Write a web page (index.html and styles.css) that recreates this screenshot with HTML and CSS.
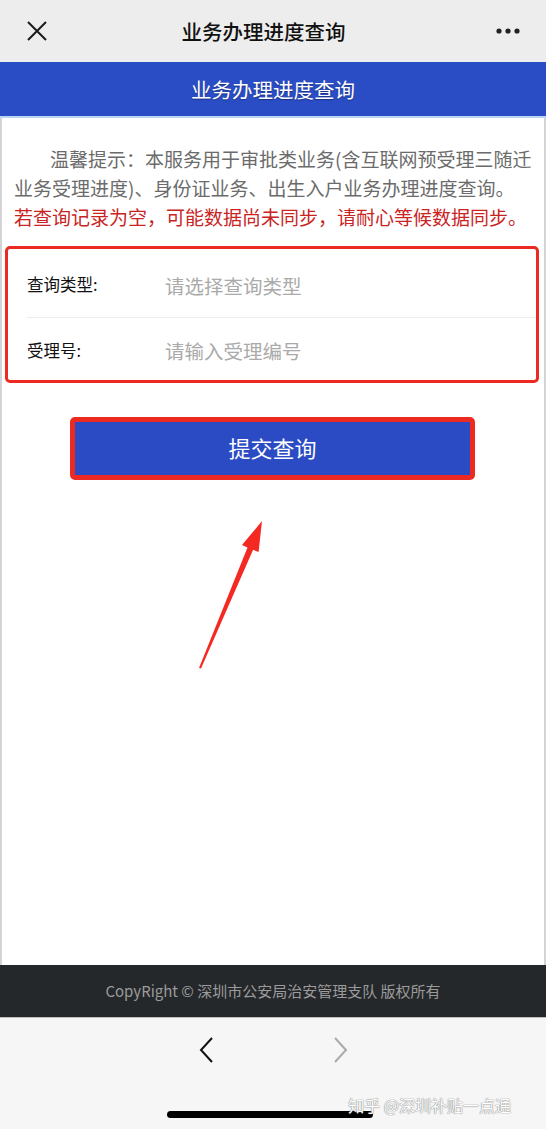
FILE: index.html
```html
<!DOCTYPE html>
<html lang="zh-CN">
<head>
  <meta charset="UTF-8">
  <meta name="viewport" content="width=device-width, initial-scale=1.0">
  <title>业务办理进度查询</title>
  <link rel="stylesheet" href="styles.css">
</head>
<body>
  <div class="topbar">
    <svg class="close" width="20" height="20" viewBox="0 0 20 20">
      <path d="M1 1 L19 19 M19 1 L1 19" stroke="#1a1a1a" stroke-width="2" fill="none"/>
    </svg>
    <div class="topbar-title">业务办理进度查询</div>
    <svg class="more" width="24" height="6" viewBox="0 0 24 6">
      <circle cx="3" cy="3" r="2.6" fill="#222"/>
      <circle cx="12" cy="3" r="2.6" fill="#222"/>
      <circle cx="21" cy="3" r="2.6" fill="#222"/>
    </svg>
  </div>

  <div class="header">业务办理进度查询</div>

  <div class="main">
    <div class="notice">
      <p class="tip">温馨提示：本服务用于审批类业务(含互联网预受理三随迁业务受理进度)、身份证业务、出生入户业务办理进度查询。</p>
      <p class="warn">若查询记录为空，可能数据尚未同步，请耐心等候数据同步。</p>
    </div>

    <form class="query-form">
      <div class="row">
        <label class="row-label">查询类型:</label>
        <span class="row-input">请选择查询类型</span>
      </div>
      <div class="row">
        <label class="row-label" for="num">受理号:</label>
        <input class="row-input" id="num" type="text" placeholder="请输入受理编号">
      </div>
    </form>

    <div class="btn-wrap">
      <button class="submit" type="button">提交查询</button>
    </div>

    <!-- 标注箭头 -->
    <svg class="arrow" viewBox="0 0 546 180" width="546" height="180">
      <polygon points="199,168 201,168.5 253.1,49.8 258.6,52.1 262,21 242,45.1 247.5,47.4" fill="#f42a22"/>
    </svg>
  </div>

  <div class="footer">CopyRight © 深圳市公安局治安管理支队 版权所有</div>

  <div class="browser-bar">
    <div class="nav">
      <svg width="16" height="26" viewBox="0 0 16 26">
        <path d="M13 1 L2 13 L13 25" stroke="#111" stroke-width="2" fill="none"/>
      </svg>
      <svg width="16" height="26" viewBox="0 0 16 26">
        <path d="M3 1 L14 13 L3 25" stroke="#aaa" stroke-width="2" fill="none"/>
      </svg>
    </div>
    <div class="home-bar"></div>
    <div class="watermark">知乎 @深圳补贴一点通</div>
  </div>
</body>
</html>
```

FILE: styles.css
```css
* {
  box-sizing: border-box;
}
body {
  font-family: "Noto Sans CJK SC", "Liberation Sans", sans-serif;
  margin: 0;
  padding: 0;
  width: 546px;
  height: 1129px;
  display: flex;
  flex-direction: column;
  background-color: #fff;
  overflow: hidden;
}
.topbar {
  height: 62px;
  background-color: #ededed;
  display: flex;
  align-items: center;
  justify-content: space-between;
  padding: 0 26px 0 27px;
}
.topbar-title {
  font-size: 20.5px;
  font-weight: 500;
  color: #111;
  margin-right: 16px;
}
.header {
  height: 56px;
  background-color: #2a4cc4;
  border-bottom: 2px solid #bcd5f4;
  color: #fff;
  font-size: 20.5px;
  text-align: center;
  line-height: 54px;
  text-shadow: 0 1px 1px rgba(0, 0, 0, 0.35);
}
.main {
  flex: 1;
  border-left: 2px solid #d4d4d4;
  border-right: 2px solid #d4d4d4;
  display: flex;
  flex-direction: column;
}
.notice {
  padding: 26px 4px 0 12px;
  font-size: 19px;
  line-height: 29px;
}
.notice p {
  margin: 0;
}
.tip {
  color: #6b6b6b;
  text-indent: 1.9em;
}
.warn {
  color: #c9241f;
}
.query-form {
  margin: 15px 5px 0 3px;
  border: 3px solid #ec2a22;
  border-radius: 5px;
  padding: 4px 0 0 0;
  height: 137px;
}
.row {
  height: 65px;
  margin-left: 19px;
  display: flex;
  align-items: center;
}
.row:first-child {
  border-bottom: 1px solid #ececec;
}
.row-label {
  width: 138px;
  font-size: 16.5px;
  color: #111;
  padding-bottom: 2px;
}
.row-input {
  font-family: inherit;
  font-size: 19.5px;
  color: #aaa;
  border: none;
  outline: none;
  padding: 0;
  background: transparent;
}
.row-input::placeholder {
  color: #aaa;
}
.btn-wrap {
  padding: 34px 0 0 68px;
}
.submit {
  display: block;
  width: 405px;
  height: 63px;
  background-color: #2a4bc4;
  border: 5px solid #ec2a22;
  border-radius: 5px;
  color: #fff;
  font-family: inherit;
  font-size: 22px;
  padding: 0 0 4px;
  cursor: pointer;
}
.arrow {
  display: block;
  margin: 20px 0 0 -2px;
}
.footer {
  height: 52px;
  background-color: #25282b;
  color: #9b9b9b;
  font-size: 15px;
  text-align: center;
  line-height: 52px;
}
.browser-bar {
  position: relative;
  height: 112px;
  background-color: #f6f6f6;
  border-top: 1px solid #bdbdbd;
}
.nav {
  display: flex;
  justify-content: center;
  gap: 117px;
  padding-top: 19px;
}
.home-bar {
  width: 206px;
  height: 7px;
  margin: 48px auto 0;
  background: #000;
  border-radius: 4px;
  transform: translateX(-3px);
}
.watermark {
  position: absolute;
  right: 35px;
  bottom: 12px;
  font-size: 16px;
  color: #fff;
  text-shadow: 0 0 1px #7a7a7a, 0 0 1px #7a7a7a;
}
```
